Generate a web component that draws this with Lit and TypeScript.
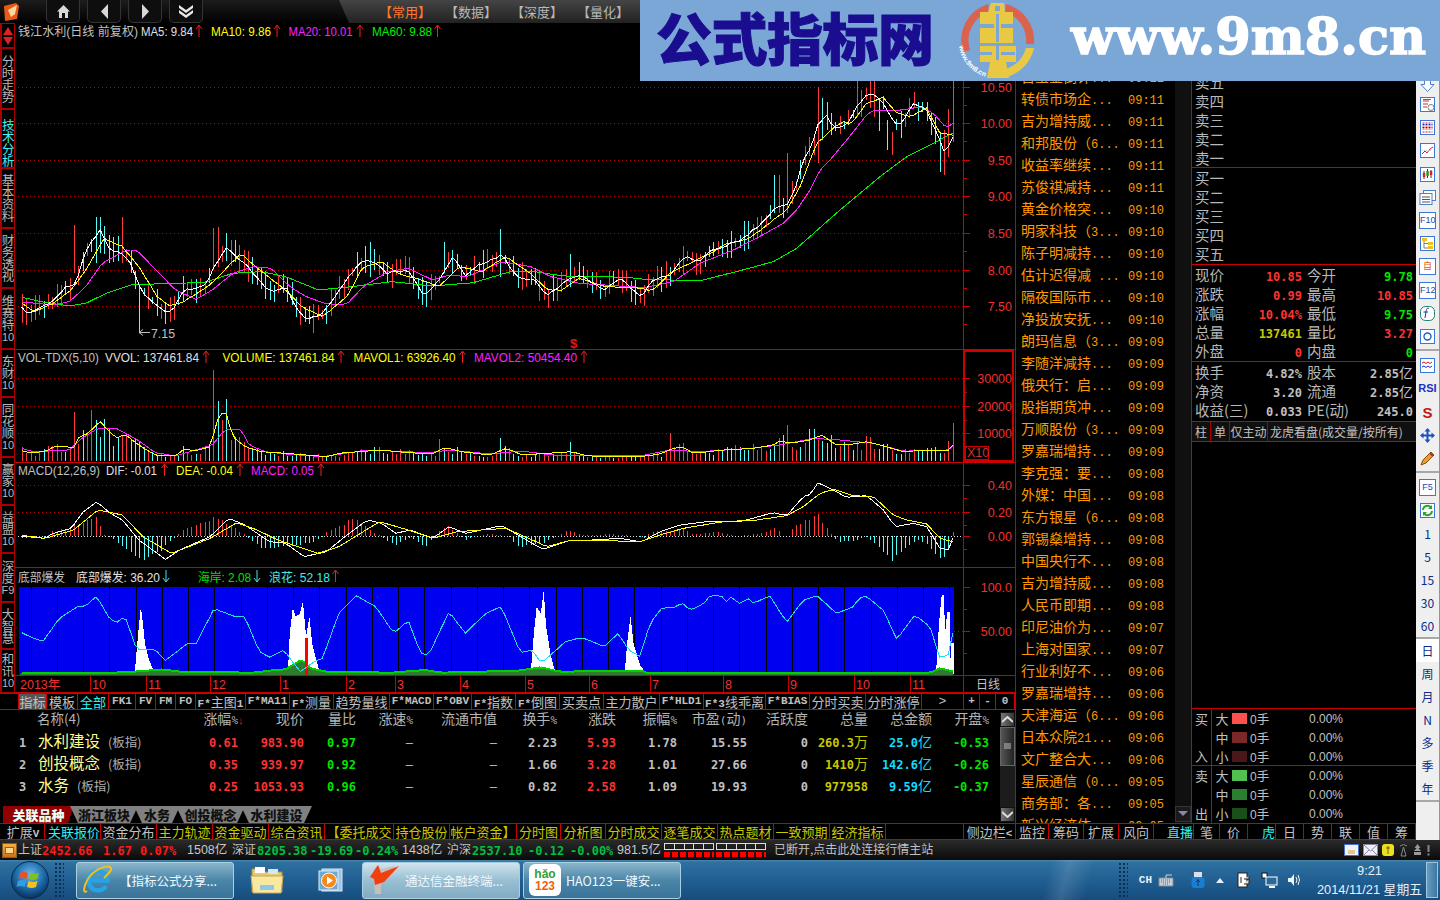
import { LitElement, html, svg, css } from 'lit';
import { customElement } from 'lit/decorators.js';

type P = number[];
const z1 = (a: P[]) => a.map(([x, y]) => [x / 2.45, y / 3]);
const z2 = (a: P[]) => a.map(([x, y]) => [x / 2.45, 350 + y / 3]);
const z3 = (a: P[]) => a.map(([x, y]) => [640 + x / 3, y / 3]);
const z4 = (a: P[]) => a.map(([x, y]) => [640 + x / 3, 350 + y / 3]);
const lerp = (pts: P[], x: number) => {
  if (x <= pts[0][0]) return pts[0][1];
  for (let i = 1; i < pts.length; i++) {
    if (x <= pts[i][0]) {
      const [a, b] = [pts[i - 1], pts[i]];
      return a[1] + ((b[1] - a[1]) * (x - a[0])) / (b[0] - a[0] || 1);
    }
  }
  return pts[pts.length - 1][1];
};
let seed = 20141121;
const rnd = () => {
  seed = (seed * 1664525 + 1013904223) >>> 0;
  return seed / 4294967296;
};

const N = 215;
const xs = Array.from({ length: N }, (_, i) => 952.7 - 4.35 * (N - 1 - i));
const line = (pts: P[], jitter = 0, lim = 953) => {
  const ps = xs.filter(x => x >= pts[0][0] - 1 && x <= lim).map(x => `${x.toFixed(1)},${(lerp(pts, x) + (rnd() - 0.5) * jitter).toFixed(1)}`);
  return ps.join(' ');
};

const ma5 = [...z1([[48,905],[60,940],[90,930],[130,905],[160,862],[185,855],[210,750],[245,690],[270,750],[300,760],[320,790],[345,870],[370,900],[405,935],[425,930],[450,870],[500,860],[530,790],[555,745],[600,790],[640,850],[665,875],[700,860],[725,920],[750,960],[790,940],[820,890],[860,820],[890,780],[925,790],[945,820],[1000,810],[1040,890],[1075,840],[1110,770],[1140,825],[1180,790],[1230,765],[1265,830],[1310,840],[1340,885],[1385,845],[1420,825],[1480,870],[1520,835],[1568,890]]), ...z3([[0,895],[40,840],[90,825],[135,770],[175,785],[210,755],[300,720],[340,690],[385,650],[410,620],[445,615],[470,550],[490,480],[515,440],[530,380],[560,345],[580,385],[620,375],[650,320],[685,280],[720,295],[750,345],[775,385],[820,310],[860,330],[890,400],[915,460],[940,405]])];
const ma10 = [...z1([[48,905],[85,935],[130,910],[170,875],[210,810],[255,715],[300,740],[340,800],[385,890],[415,918],[450,905],[515,855],[590,760],[625,800],[690,860],[740,920],[790,950],[850,890],[890,800],[935,785],[975,820],[1030,840],[1075,860],[1125,800],[1180,815],[1240,770],[1300,820],[1340,868],[1375,870],[1420,835],[1480,860],[1568,865]]), ...z3([[0,868],[40,870],[90,820],[150,790],[210,760],[250,735],[330,715],[400,660],[440,630],[480,560],[510,480],[530,430],[580,385],[610,365],[630,375],[680,310],[730,292],[770,340],[810,350],[860,325],[900,400],[935,405]])];
const ma20 = [...z1([[48,905],[130,915],[170,905],[210,860],[250,790],[310,750],[335,750],[390,820],[430,870],[480,898],[520,870],[570,820],[620,800],[665,805],[710,860],[750,890],[800,912],[850,912],[890,860],[950,815],[1000,805],[1060,840],[1100,825],[1145,830],[1230,785],[1300,800],[1350,830],[1420,850],[1480,855],[1568,862]]), ...z3([[0,865],[50,855],[100,845],[180,790],[280,750],[340,720],[430,670],[470,630],[510,570],[540,510],[570,480],[620,420],[680,345],[700,330],[790,330],[840,320],[880,340],[920,385],[935,370]])];
const ma60 = [...z1([[48,890],[100,905],[170,918],[210,910],[260,880],[320,855],[420,850],[500,848],[570,820],[640,815],[700,830],[780,870],[860,860],[960,845],[1060,858],[1160,848],[1250,815],[1310,815],[1380,828],[1450,828],[1568,835]]), ...z3([[0,838],[180,842],[300,812],[400,785],[470,745],[600,630],[720,530],[800,470],[880,430],[935,400]])];

const isUp: boolean[] = [];
const candles: { r: string; c: string } = (() => {
  const over: [number, number, number, boolean][] = [];
  const o1: P[] = [[340,855,1000,0],[185,675,820,1],[230,650,790,0],[245,650,760,0],[300,652,790,1],[520,685,810,1],[537,682,800,1],[1230,688,830,0],[1393,762,860,0],[910,725,830,0],[1087,725,820,0]];
  const o3: P[] = [[405,525,640,0],[412,525,640,1],[448,460,640,1],[532,262,490,1],[545,295,420,0],[655,243,350,1],[703,243,350,1],[938,243,425,1],[925,328,470,1],[907,390,525,1],[897,400,515,0],[748,360,450,0],[757,395,465,1],[712,300,392,0]];
  o1.forEach(o => over.push([o[0] / 2.45, o[1] / 3, o[2] / 3, !!o[3]]));
  o3.forEach(o => over.push([640 + o[0] / 3, o[1] / 3, o[2] / 3, !!o[3]]));
  let r = '', c = '';
  xs.forEach((x, i) => {
    const m = lerp(ma5, x);
    const rising = lerp(ma5, x + 6) < lerp(ma5, x - 6);
    let up = rnd() < 0.72 ? rising : !rising;
    let y1 = m - 3 - rnd() * 13;
    let y2 = m + 3 + rnd() * 13;
    const ov = over.find(o => Math.abs(o[0] - x) <= 2.2);
    if (ov) { y1 = ov[1]; y2 = ov[2]; up = ov[3]; }
    isUp[i] = up;
    const s = `M${Math.round(x) + 0.5} ${y1.toFixed(0)}V${y2.toFixed(0)}`;
    if (up) r += s; else c += s;
  });
  return { r, c };
})();

const vol1 = [...z2([[48,300],[70,308],[110,305],[135,288],[165,290],[180,295],[190,265],[215,250],[245,215],[265,240],[285,265],[305,252],[340,285],[380,315],[430,318],[450,298],[480,302],[515,290],[535,200],[552,182],[570,260],[600,290],[640,305],[700,310],[800,320],[830,310],[930,300],[1000,308],[1060,312],[1090,292],[1130,305],[1200,315],[1240,295],[1280,315],[1400,305],[1440,318],[1568,320]]), ...z4([[0,320],[60,312],[100,295],[130,292],[160,310],[250,300],[340,295],[400,285],[420,272],[450,280],[510,270],[545,255],[590,285],[640,282],[680,275],[720,285],[790,305],[870,300],[925,300],[935,285]])];
const vol2 = [...z2([[48,293],[80,305],[170,300],[200,265],[240,235],[285,235],[340,272],[380,308],[430,318],[520,285],[550,240],[590,237],[610,285],[650,305],[700,312],[790,320],[900,300],[1050,308],[1100,300],[1200,312],[1280,303],[1350,315],[1568,318]]), ...z4([[0,318],[90,300],[180,305],[330,295],[420,285],[520,265],[600,270],[700,280],[790,303],[920,302],[935,290]])];
const volBars = (() => {
  const over: [number, number, boolean][] = [];
  ([[520,60,1],[530,153,0],[185,185,1],[224,180,1],[232,210,0],[1078,268,1],[1230,265,0],[1393,275,0]] as P[]).forEach(o => over.push([o[0] / 2.45, 350 + o[1] / 3, !!o[2]]));
  ([[95,250,1],[448,225,1],[514,237,0],[937,220,1],[925,272,1]] as P[]).forEach(o => over.push([640 + o[0] / 3, 350 + o[1] / 3, !!o[2]]));
  let r = '', c = '';
  xs.forEach((x, i) => {
    const h = (461 - lerp(vol1, x)) * (0.55 + rnd() * 0.8);
    let top = 461 - h, up = isUp[i];
    const ov = over.find(o => Math.abs(o[0] - x) <= 2.2);
    if (ov) { top = ov[1]; up = ov[2]; }
    const s = `M${Math.round(x) + 0.5} ${top.toFixed(0)}V461`;
    if (up) r += s; else c += s;
  });
  return { r, c };
})();

const dif = [...z2([[48,558],[110,565],[130,550],[175,535],[200,490],[237,455],[270,490],[300,510],[340,570],[380,605],[405,628],[440,600],[515,560],[560,505],[600,525],[660,575],[700,580],[745,620],[800,605],[850,555],[900,510],[935,520],[970,550],[1005,540],[1060,565],[1100,530],[1140,550],[1230,527],[1290,570],[1330,598],[1400,570],[1450,570],[1520,565],[1568,575]]), ...z4([[0,578],[60,545],[120,525],[200,515],[300,515],[400,488],[440,497],[490,440],[515,432],[530,397],[570,415],[620,442],[680,437],[730,480],[765,530],[820,520],[860,530],[900,595],[930,600],[938,565]])];
const dea = [...z2([[48,555],[110,565],[180,540],[240,480],[300,495],[350,560],[420,610],[515,565],[580,518],[630,540],[680,570],[780,610],[830,590],[930,515],[1000,540],[1060,565],[1120,545],[1240,535],[1340,590],[1400,570],[1480,572],[1568,575]]), ...z4([[0,575],[60,555],[130,535],[250,515],[350,510],[440,497],[490,470],[540,430],[580,418],[640,437],[700,440],[760,495],[800,510],[860,522],[900,565],[938,575]])];
const histPts = [...z2([[48,565],[110,562],[125,545],[180,525],[235,495],[255,555],[265,560],[300,590],[345,640],[390,610],[425,565],[435,555],[450,535],[520,500],[545,510],[600,555],[610,565],[640,600],[720,590],[770,575],[790,560],[800,545],[870,498],[920,550],[940,565],[965,590],[1000,565],[1015,570],[1040,595],[1065,555],[1095,525],[1125,555],[1140,570],[1200,550],[1245,560],[1270,595],[1330,580],[1370,555],[1390,540],[1430,555],[1500,552],[1568,560]]), ...z4([[0,575],[30,545],[100,540],[130,530],[150,552],[240,545],[290,558],[370,548],[405,532],[430,558],[440,560],[460,530],[530,485],[575,555],[590,575],[640,575],[680,560],[720,600],[760,638],[790,600],[830,570],[860,585],[905,635],[925,600],[938,545]])];
const hist = (() => {
  let r = '', c = '';
  xs.forEach(x => {
    if (x < 19) return;
    const t = lerp(histPts, x);
    const y = 536 + (t - 536) * (0.82 + rnd() * 0.18);
    const s = `M${Math.round(x) + 0.5} 536V${y.toFixed(0)}`;
    if (y < 536) r += s; else c += s;
  });
  return { r, c };
})();

const cy = [...z2([[48,845],[70,858],[105,875],[125,840],[145,805],[190,770],[210,768],[237,738],[265,800],[285,820],[305,795],[335,900],[380,898],[405,932],[460,880],[480,882],[525,775],[575,800],[600,800],[635,905],[660,922],[695,900],[735,965],[770,935],[790,925],[830,790],[873,736],[920,770],[965,850],[1000,810],[1030,910],[1050,915],[1100,785],[1140,850],[1190,790],[1228,770],[1275,908],[1305,900],[1325,940],[1385,875],[1425,862],[1480,890],[1515,850],[1540,900],[1568,920]]), ...z4([[0,920],[30,820],[65,775],[105,772],[125,758],[150,780],[190,762],[210,737],[245,738],[255,760],[270,740],[300,760],[328,745],[340,760],[390,738],[440,817],[490,750],[530,737],[590,790],[640,770],[660,742],[680,740],[730,780],[770,868],[825,795],[870,830],[900,925],[930,910],[938,850]])];
const grn = [...z2([[48,968],[250,970],[330,965],[400,958],[440,965],[620,968],[660,962],[700,958],[740,928],[760,955],[800,965],[960,968],[1040,960],[1080,968],[1270,962],[1325,952],[1370,965],[1568,962]]), ...z4([[0,960],[25,970],[760,968],[870,968],[900,955],[940,965]])];
const pts = (a: P[]) => a.map(p => `${p[0].toFixed(1)},${p[1].toFixed(1)}`).join(' ');
const spikes = [
  z2([[330,972],[335,900],[340,830],[345,770],[350,820],[355,880],[365,930],[380,972]]),
  z2([[705,972],[710,850],[717,775],[725,800],[735,790],[742,755],[750,860],[758,800],[765,880],[775,930],[785,972]]),
  z2([[1300,972],[1308,850],[1315,770],[1325,790],[1332,720],[1338,830],[1350,920],[1362,972]]),
  z2([[1530,972],[1538,860],[1545,800],[1552,880],[1568,945],[1568,972]]),
  z4([[0,945],[20,972],[0,972]]),
  z4([[888,972],[897,820],[905,735],[912,735],[915,850],[922,785],[930,785],[932,972]]),
  z4([[933,972],[933,880],[942,880],[942,972]]),
];

const textEl = (x: number, y: number, t: string, fill: string, len?: number, anchor = 'start') =>
  len
    ? svg`<text x=${x} y=${y} fill=${fill} textLength=${len} lengthAdjust="spacingAndGlyphs">${t}</text>`
    : svg`<text x=${x} y=${y} fill=${fill} text-anchor=${anchor}>${t}</text>`;
const arrow = (x: number, y: number, c: string, up = true) =>
  up
    ? svg`<path d="M${x} ${y + 12}V${y + 1}M${x - 3} ${y + 4}L${x} ${y}L${x + 3} ${y + 4}" stroke=${c} fill="none"/>`
    : svg`<path d="M${x} ${y}V${y + 11}M${x - 3} ${y + 8}L${x} ${y + 12}L${x + 3} ${y + 8}" stroke=${c} fill="none"/>`;

const RED = '#cc0000', GRID = '#b80000';
const gridLine = (y: number) => svg`<line x1="18" x2="963" y1=${y + 0.5} y2=${y + 0.5} stroke=${GRID} stroke-dasharray="1 3"/>`;
const tick = (y: number, long = true) => svg`<line x1="963" x2=${long ? 970 : 967} y1=${y + 0.5} y2=${y + 0.5} stroke=${RED}/>`;
const axisT = (y: number, t: string) => svg`<text x="1012" y=${y + 4.5} fill="#f03030" text-anchor="end" class="ax">${t}</text>`;
const vAxis = (y1: number, y2: number) => svg`<line x1="963.5" x2="963.5" y1=${y1} y2=${y2} stroke=${RED}/>`;

const pricePane = () => {
  const ys: [number, string][] = [[87,'10.50'],[123,'10.00'],[160,'9.50'],[196,'9.00'],[233,'8.50'],[270,'8.00'],[306,'7.50']];
  return svg`
  ${ys.map(([y]) => gridLine(y))}
  ${vAxis(23, 349)}
  ${ys.map(([y, t]) => svg`${tick(y)}${axisT(y, t)}${tick(y + 18, false)}`)}
  <g shape-rendering="crispEdges"><path d=${candles.r} stroke="#ff3a3a" fill="none"/><path d=${candles.c} stroke="#54fcfc" fill="none"/>
  <polyline points=${line(ma60)} fill="none" stroke="#00f000"/>
  <polyline points=${line(ma20)} fill="none" stroke="#ff20ff"/>
  <polyline points=${line(ma10, 1)} fill="none" stroke="#ffff00"/>
  <polyline points=${line(ma5, 2)} fill="none" stroke="#ffffff"/></g>
  ${textEl(18, 36, '钱江水利(日线 前复权)', '#c0c0c0', 120)}
  ${textEl(141, 36, 'MA5: 9.84', '#e0e0e0', 52)}${arrow(199, 25, '#f02020')}
  ${textEl(211, 36, 'MA10: 9.86', '#ffff00', 60)}${arrow(277, 25, '#f02020')}
  ${textEl(288.6, 36, 'MA20: 10.01', '#ff20ff', 64)}${arrow(360, 25, '#f02020')}
  ${textEl(372, 36, 'MA60: 9.88', '#00f000', 60)}${arrow(437.5, 25, '#f02020')}
  <path d="M139 332.5h11M139 332.5l4-3M139 332.5l4 3" stroke="#c0c0c0" fill="none"/>
  ${textEl(151, 338, '7.15', '#c0c0c0', 24)}
  <text x="573.5" y="348" fill="#f01010" text-anchor="middle" class="dollar">$</text>
  <line x1="15" x2="1015" y1="349.5" y2="349.5" stroke=${RED}/>`;
};
const volPane = () => {
  const ys: [number, string][] = [[378,'30000'],[406,'20000'],[433,'10000']];
  return svg`
  ${ys.map(([y]) => gridLine(y))}
  ${ys.map(([y, t]) => svg`${tick(y)}${axisT(y, t)}${tick(y + 14, false)}`)}
  <g shape-rendering="crispEdges"><path d=${volBars.r} stroke="#ff3a3a" fill="none"/><path d=${volBars.c} stroke="#54fcfc" fill="none"/>
  <polyline points=${line(vol2)} fill="none" stroke="#ff20ff"/>
  <polyline points=${line(vol1)} fill="none" stroke="#ffff00"/></g>
  ${textEl(18, 362, 'VOL-TDX(5,10)', '#c0c0c0', 81)}
  ${textEl(105, 362, 'VVOL: 137461.84', '#e0e0e0', 94)}${arrow(206, 351, '#f02020')}
  ${textEl(222.5, 362, 'VOLUME: 137461.84', '#ffff00', 112)}${arrow(341, 351, '#f02020')}
  ${textEl(353.5, 362, 'MAVOL1: 63926.40', '#ffff00', 102)}${arrow(462.5, 351, '#f02020')}
  ${textEl(474, 362, 'MAVOL2: 50454.40', '#ff20ff', 103)}${arrow(584, 351, '#f02020')}
  <rect x="964" y="351" width="49" height="110" fill="none" stroke=${RED} stroke-width="2"/>
  <rect x="965.5" y="446.5" width="23" height="13" fill="none" stroke=${RED}/>
  <text x="967" y="457" fill="#d03030">X10</text>
  <line x1="15" x2="1015" y1="462.5" y2="462.5" stroke=${RED}/>`;
};
const macdPane = () => {
  const ys: [number, string][] = [[485,'0.40'],[512,'0.20'],[536,'0.00']];
  return svg`
  ${gridLine(485)}${gridLine(512)}
  <line x1="18" x2="963" y1="536.5" y2="536.5" stroke="#e0e0e0" stroke-dasharray="1 2"/>
  ${vAxis(463, 568)}
  ${ys.map(([y, t]) => svg`${tick(y)}${axisT(y, t)}${tick(y + 13, false)}`)}
  <g shape-rendering="crispEdges"><path d=${hist.r} stroke="#ff3a3a" fill="none"/><path d=${hist.c} stroke="#54fcfc" fill="none"/>
  <polyline points=${line(dif)} fill="none" stroke="#ffffff"/>
  <polyline points=${line(dea)} fill="none" stroke="#ffff00"/></g>
  ${textEl(18, 475, 'MACD(12,26,9)', '#c0c0c0', 82)}
  ${textEl(106, 475, 'DIF: -0.01', '#e0e0e0', 51)}${arrow(164.5, 464, '#f02020')}
  ${textEl(176, 475, 'DEA: -0.04', '#ffff00', 57)}${arrow(240, 464, '#f02020')}
  ${textEl(251, 475, 'MACD: 0.05', '#ff20ff', 63)}${arrow(321, 464, '#f02020')}
  <line x1="15" x2="1015" y1="567.5" y2="567.5" stroke=${RED}/>`;
};
const signalPane = () => {
  const vbars = Array.from({ length: 36 }, (_, i) => 30.6 + i * 26.25).filter(x => x < 953);
  const gpoly = `19,675 ${line(grn, 0)} 953,675`;
  return svg`
  <rect x="19" y="587" width="935" height="88" fill="#0000f0"/>
  ${vAxis(568, 675)}
  ${vbars.map(x => svg`<line x1=${Math.round(x) + 0.5} x2=${Math.round(x) + 0.5} y1="587" y2="675" stroke="#000"/>`)}
  <g shape-rendering="crispEdges">
  ${spikes.map(s => svg`<polygon points=${pts(s)} fill="#ffffff"/>`)}
  <polygon points=${gpoly} fill="#2f7a2f"/>
  <polyline points=${line(grn, 0)} fill="none" stroke="#00d000" stroke-width="2"/>
  <rect x="305" y="638" width="3" height="37" fill="#ff0000"/>
  <polyline points=${line(cy, 0.5)} fill="none" stroke="#20e0f0"/></g>
  <line x1="963" x2="970" y1="587.5" y2="587.5" stroke=${RED}/>${tick(609, false)}${tick(631)}${tick(653, false)}
  ${axisT(587, '100.0')}${axisT(631, '50.00')}
  <line x1="954" x2="963" y1="631.5" y2="631.5" stroke=${GRID} stroke-dasharray="1 3"/>
  ${textEl(18, 582, '底部爆发', '#c0c0c0', 47)}
  ${textEl(76, 582, '底部爆发: 36.20', '#e0e0e0', 84)}${arrow(166, 570, '#40e8f0', false)}
  ${textEl(198, 582, '海岸: 2.08', '#00e000', 53)}${arrow(257, 570, '#40e8f0', false)}
  ${textEl(269, 582, '浪花: 52.18', '#40e8f0', 61)}${arrow(335.5, 570, '#f02020')}
  <line x1="15" x2="1015" y1="675.5" y2="675.5" stroke=${RED}/>`;
};
const datePane = () => {
  const ds: [number, string][] = [[92,'10'],[148,'11'],[212,'12'],[282,'1'],[348,'2'],[397,'3'],[462,'4'],[527,'5'],[591,'6'],[652,'7'],[725,'8'],[790,'9'],[856,'10'],[912,'11']];
  return svg`
  ${textEl(20, 689, '2013年', '#f03030')}
  ${ds.map(([x, t]) => svg`<line x1=${x - 1.5} x2=${x - 1.5} y1="676" y2="692" stroke=${RED}/>${textEl(x, 689, t, '#f03030')}`)}
  ${vAxis(676, 692)}
  ${textEl(976, 689, '日线', '#c0c0c0', 24)}
  <line x1="15" x2="1015" y1="692.5" y2="692.5" stroke=${RED}/>`;
};

const newsRows: [string, string][] = [['百宝金倒计...','09:11'],['转债市场企...','09:11'],['吉为增持威...','09:11'],['和邦股份（6...','09:11'],['收益率继续...','09:11'],['苏俊祺减持...','09:11'],['黄金价格突...','09:10'],['明家科技（3...','09:10'],['陈子明减持...','09:10'],['估计迟得减 ...','09:10'],['隔夜国际市...','09:10'],['净投放安抚...','09:10'],['朗玛信息（3...','09:09'],['李随洋减持...','09:09'],['俄央行：启...','09:09'],['股指期货冲...','09:09'],['万顺股份（3...','09:09'],['罗嘉瑞增持...','09:09'],['李克强：要...','09:08'],['外媒：中国...','09:08'],['东方银星（6...','09:08'],['郭锡燊增持...','09:08'],['中国央行不...','09:08'],['吉为增持威...','09:08'],['人民币即期...','09:08'],['印尼油价为...','09:07'],['上海对国家...','09:07'],['行业利好不...','09:06'],['罗嘉瑞增持...','09:06'],['天津海运（6...','09:06'],['日本众院21...','09:06'],['文广整合大...','09:06'],['星辰通信（0...','09:05'],['商务部：各...','09:05'],['新兴经济体...','09:05']];

const mix = (t: string) =>
  t.split(/([\u4e00-\u9fff\u3000-\u303f\uff00-\uffef]+)/).filter(Boolean).map(s =>
    /[\u4e00-\u9fff\u3000-\u303f\uff00-\uffef]/.test(s) ? html`<span class="cjk">${s}</span>` : html`<span class="lat">${s}</span>`);

const barTabs: [string, number, number?][] = [['指标',19,1],['模板',47],['全部',78,2],['FK1',109],['FV',136],['FM',156],['FO',176],['F*主图1',196],['F*MA11',246],['F*测量',290],['趋势量线',334],['F*MACD',390],['F*OBV',434],['F*指数',472],['F*倒图',516],['买卖点',560],['主力散户',604],['F*HLD1',660],['F*3线乖离',704],['F*BIAS',766],['分时买卖',810],['分时涨停',866],['',922],['+',964],['-',980],['0',996]];
const barEnd = 1015;
const lowTabs: [string, number, string][] = [['扩展V',2,'g'],['关联报价',45,'c'],['资金分布',101,'g'],['主力轨迹',157,'y'],['资金驱动',213,'y'],['综合资讯',269,'y'],['【委托成交',325,'y'],['持仓股份',394,'y'],['帐户资金】',450,'y'],['分时图',517,'y'],['分析图',561,'y'],['分时成交',606,'y'],['逐笔成交',662,'y'],['热点题材',718,'y'],['一致预期',774,'y'],['经济指标',830,'y'],['',886,'g'],['侧边栏<',964,'g'],['监控',1016,'g'],['筹码',1049,'g'],['扩展',1084,'g'],['风向',1119,'g'],['直播',1154,'c'],['笔',1194,'g'],['价',1220,'g'],['虎',1248,'c'],['日',1276,'g'],['势',1304,'g'],['联',1332,'g'],['值',1360,'g'],['筹',1388,'g']];
const lowEnd = 1416;

const cols = [48, 66, 52, 57, 84, 60, 59, 61, 70, 61, 60, 64, 57];
const heads = ['涨幅%', '现价', '量比', '涨速%', '流通市值', '换手%', '涨跌', '振幅%', '市盈(动)', '活跃度', '总量', '总金额', '开盘%'];
const rowsT: { n: string; nm: string; tag: string; v: string[] }[] = [
  { n: '1', nm: '水利建设', tag: '(板指)', v: ['0.61','983.90','0.97','—','—','2.23','5.93','1.78','15.55','0','260.3万','25.0亿','-0.53'] },
  { n: '2', nm: '创投概念', tag: '(板指)', v: ['0.35','939.97','0.92','—','—','1.66','3.28','1.01','27.66','0','1410万','142.6亿','-0.26'] },
  { n: '3', nm: '水务', tag: '(板指)', v: ['0.25','1053.93','0.96','—','—','0.82','2.58','1.09','19.93','0','977958','9.59亿','-0.37'] },
];
const colCls = ['r', 'r', 'gn', 'g', 'g', 'g', 'r', 'g', 'g', 'g', 'y', 'cy', 'gn'];

const railTabs: [string, number, string?][] = [['分时走势',61],['技术分析',59,'c'],['基本资料',60],['财务透视',60],['维赛特|10',61],['东财|10',48],['同花顺|10',60],['赢家|10',48],['益盟|10',48],['深度|F9',49],['大智慧',47],['和讯|10',44]];

const quoteRows: [string, string, string, string, string, string][] = [
  ['现价','10.85','r','今开','9.78','gn'],['涨跌','0.99','r','最高','10.85','r'],['涨幅','10.04%','r','最低','9.75','gn'],['总量','137461','y','量比','3.27','r'],['外盘','0','r','内盘','0','gn'],
];
const quote2: [string, string, string, string][] = [['换手','4.82%','股本','2.85亿'],['净资','3.20','流通','2.85亿'],['收益(三)','0.033','PE(动)','245.0']];

const flows = (side: string[], labels: string[], colors: string[]) => html`
  <div class="flow">
    <div class="flowside">${side.map(s => html`<span>${s}</span>`)}</div>
    <div class="flowrows">
      ${labels.map((l, i) => html`<div class="flowrow"><span class="fl">${l}</span><i class="sw" style="background:${colors[i]}"></i><span class="fv">${mix('0手')}</span><span class="fp">0.00%</span></div>`)}
    </div>
  </div>`;

const box = (inner: unknown) => html`<svg width="17" height="17" viewBox="0 0 17 17">${inner}</svg>`;
const frame = svg`<rect x="1.5" y="1.5" width="14" height="14" fill="#fff" stroke="#3a78d8"/>`;
const icons: Record<string, unknown> = {
  down: box(svg`<path d="M5.5 1.5h6v7h3.5l-6.5 7-6.5-7h3.5z" fill="#fff" stroke="#4a80c8"/>`),
  check: box(svg`${frame}<path d="M4 5h6M4 8h5M4 11h4" stroke="#c03030"/><path d="M4 3.5h8" stroke="#309030"/><circle cx="12" cy="11.5" r="3" fill="none" stroke="#808080"/>`),
  grid: box(svg`${frame}<path d="M3.5 4h10M3.5 7h10M3.5 10h10M3.5 13h10" stroke="#d02020" stroke-dasharray="2 1"/><path d="M3.5 5.5h10M3.5 8.5h10" stroke="#2020c0" stroke-dasharray="2 1"/>`),
  lineup: box(svg`${frame}<path d="M3 12l3-3 2 2 3-4 3-2" fill="none" stroke="#e02020"/><path d="M3 8.5h10" stroke="#bbb" stroke-dasharray="1 1"/>`),
  candle: box(svg`${frame}<path d="M5 5v8M8.5 3v9M12 4v8" stroke="#333"/><rect x="3.8" y="7" width="2.5" height="4" fill="#e02020"/><rect x="7.3" y="5" width="2.5" height="5" fill="#20a020"/><rect x="10.8" y="5" width="2.5" height="4" fill="#e02020"/>`),
  stack: box(svg`<rect x="4.5" y="1.5" width="12" height="10" fill="#fff" stroke="#4a80c8"/><rect x="1" y="4.5" width="12" height="11" fill="#fff" stroke="#4a80c8"/><path d="M3 8h8M3 10.5h8M3 13h8" stroke="#555"/>`),
  tree: box(svg`${frame}<rect x="3" y="3" width="5" height="3" fill="#f0c020"/><rect x="9" y="7" width="5" height="3" fill="#f0c020"/><rect x="9" y="11" width="5" height="3" fill="#f0c020"/><path d="M5 6v7h4M5 8.5h4" stroke="#808080" fill="none"/>`),
  wave: box(svg`${frame}<path d="M3 6l2-1 2 1.5 2-1.5 2 1.5 2-1.5" fill="none" stroke="#d02020"/><path d="M3 10l2-1 2 1.5 2-1.5 2 1.5 2-1.5" fill="none" stroke="#2030c0"/>`),
  circle: box(svg`${frame}<circle cx="8.5" cy="8.5" r="3.5" fill="none" stroke="#2060c0" stroke-width="1.4"/>`),
  fx: box(svg`<rect x="1.5" y="1.5" width="14" height="14" rx="5" fill="#fff" stroke="#208070"/><path d="M10 3.5c-2-1-2.5.5-3 3L6 13M4.5 7H9" stroke="#2030a0" fill="none"/>`),
  move: box(svg`<path d="M8.5 1l3 3.5h-2v3h3v-2L16 8.5l-3.500 3v-2h-3v3h2l-3 3.500-3-3.500h2v-3h-3v2L1 8.500l3.500-3v2h3v-3h-2z" fill="#1a50c0"/>`),
  pencil: box(svg`<path d="M2 15l2-5 8-8 3 3-8 8z" fill="#e8a030" stroke="#805010"/><path d="M11 3l3 3" stroke="#b03030" stroke-width="2"/>`),
  refresh: box(svg`${frame}<path d="M4 8a4.500 4.500 0 0 1 8-2.500M13 9a4.500 4.500 0 0 1-8 2.500" fill="none" stroke="#30a030" stroke-width="2"/><path d="M13 3v4h-4z M4 14v-4h4z" fill="#30a030"/>`),
};
const txtIcon = (t: string, c: string) => html`<span class="ti" style="color:${c}">${t}</span>`;

const orb = html`<svg width="44" height="40" viewBox="0 0 44 40">
  <defs><radialGradient id="orbg" cx="50%" cy="35%" r="60%"><stop offset="0" stop-color="#6fb8e8"/><stop offset="0.6" stop-color="#1f6fb0"/><stop offset="1" stop-color="#0c3a68"/></radialGradient></defs>
  <circle cx="22" cy="20" r="18.500" fill="url(#orbg)" stroke="#0a2a4a"/>
  <path d="M12 13q4 -2 8 0l-1.500 6q-4 -2 -8 0z" fill="#f05020"/><path d="M22 13q4 2 9 0l-1.500 6q-4 2 -9 0z" fill="#80c020"/>
  <path d="M10 21q4 -2 8 0l-1.500 6q-4 -2 -8 0z" fill="#30a0e0"/><path d="M20.500 21q4 2 9 0l-1.500 6q-4 2 -9 0z" fill="#f8c020"/>
</svg>`;
const grip = html`<svg width="9" height="38" viewBox="0 0 9 38">${[0, 1, 2, 3, 4, 5, 6, 7, 8].map(i => svg`<path d="M0 ${i * 4 + 2}h2v2h-2zM4 ${i * 4 + 2}h2v2h-2zM8 ${i * 4 + 2}h1v2h-1z" fill="#0c3050"/>`)}</svg>`;
const ieIcon = html`<svg width="32" height="32" viewBox="0 0 32 32"><path d="M7 16.500h18.500A9.500 9.500 0 1 0 24 22" fill="none" stroke="#24a4e8" stroke-width="4.500"/><path d="M5 27C1 30 1 24 6 15S24 1 28 3s-3 8-6 11" fill="none" stroke="#f0c020" stroke-width="2"/></svg>`;
const folderIcon = html`<svg width="34" height="30" viewBox="0 0 34 30"><path d="M2 4h10l2 3h18v20H2z" fill="#e8c870" stroke="#b09040"/><rect x="5" y="2" width="10" height="6" fill="#fff"/><rect x="18" y="4" width="10" height="5" fill="#cfe8f8"/><path d="M1 11h32l-2 17H3z" fill="#f8e8a0" stroke="#c8a850"/><path d="M10 20h14v5H10z" fill="#90c8e8"/></svg>`;
const mediaIcon = html`<svg width="26" height="26" viewBox="0 0 26 26"><rect x="4" y="2" width="20" height="22" fill="#9cc4e4" stroke="#d8e8f4"/><rect x="1" y="4" width="19" height="19" fill="#6fa8d0" stroke="#e0eef8"/><circle cx="11" cy="13.500" r="7.500" fill="#f58a1c" stroke="#fff"/><path d="M9 9.500l6 4-6 4z" fill="#fff"/></svg>`;
const tdxIcon = html`<svg width="30" height="32" viewBox="0 0 30 32"><path d="M4 6l5-5 3 4 14-3-14 14v14H6z" fill="#c8c0b8"/><path d="M1 13l8-12 3 8 18-7-15 16-9 3-1-6z" fill="#f04010"/></svg>`;
const logoTop = html`<svg width="16" height="18" viewBox="0 0 16 18"><path d="M1 3l12-3 3 3-2 13-12 2z" fill="#e85818"/><path d="M5 7l9-5-2 9-4 3z" fill="#f8d8a0"/></svg>`;
const iconsTray = {
  kb: html`<svg width="16" height="14" viewBox="0 0 16 14"><path d="M1 5h14v8H1z" fill="#c8d0d8" stroke="#808890"/><path d="M3 7h10M3 9h10M5 11h6" stroke="#606870" stroke-dasharray="1 1"/><path d="M8 5V2h6" fill="none" stroke="#c8d0d8"/></svg>`,
  usb: html`<svg width="14" height="17" viewBox="0 0 14 17"><rect x="3" y="0" width="8" height="6" fill="#dde"/><rect x="0.500" y="5" width="13" height="11" rx="3" fill="#1a7ed0"/><path d="M7 7v7M5 10l2-2 2 2" stroke="#0a3a70" fill="none"/></svg>`,
  up: html`<svg width="8" height="6" viewBox="0 0 8 6"><path d="M0 6l4-5 4 5z" fill="#e8f0f8"/></svg>`,
  plug: html`<svg width="14" height="18" viewBox="0 0 14 18"><rect x="1" y="2" width="9" height="14" fill="#fff" stroke="#222"/><path d="M7 8h5V5M12 8v5H7" stroke="#222" fill="#ddd"/><path d="M4 12V6" stroke="#222"/></svg>`,
  net: html`<svg width="17" height="17" viewBox="0 0 17 17"><rect x="1" y="1" width="5" height="5" fill="#fff" stroke="#111"/><rect x="5" y="5" width="11" height="8" fill="#2a6a9a" stroke="#fff"/><path d="M8 15h6" stroke="#fff" stroke-width="2"/></svg>`,
  spk: html`<svg width="14" height="14" viewBox="0 0 14 14"><path d="M1 5h3l3-4v12l-3-4H1z" fill="#f0f4f8"/><path d="M9 4q2 3 0 6M11 2q3 5 0 10" stroke="#f0f4f8" fill="none"/></svg>`,
};
const statusIcons = html`
  <svg width="15" height="12" viewBox="0 0 15 12"><rect x="0.500" y="0.500" width="14" height="11" fill="#eef2fa" stroke="#4a70c8"/><path d="M4 7h7M4 9h7" stroke="#d8a020"/></svg>
  <svg width="15" height="12" viewBox="0 0 15 12"><rect x="0.500" y="0.500" width="14" height="11" fill="#eef" stroke="#889"/><path d="M1 1l6.500 6L14 1M1 11l5-5M14 11l-5-5" stroke="#889" fill="none"/></svg>
  <svg width="12" height="12" viewBox="0 0 12 12"><rect width="12" height="12" rx="3" fill="#e8e020"/><path d="M6 2v8M4 4h4" stroke="#806000"/></svg>
  <svg width="11" height="14" viewBox="0 0 11 14"><path d="M5.500 4L3 13h5zM2 3q3.500-3 7 0" stroke="#888" fill="none"/></svg>
  <svg width="9" height="12" viewBox="0 0 9 12"><path d="M4.500 0l3 4h-6zM4.500 3l3.500 4h-7zM1 8h7v3H1z" fill="#999"/></svg>
  <svg width="5" height="11" viewBox="0 0 5 11"><path d="M1.500 0h2v7h-2zM1.500 8.500h2v2h-2z" fill="#888"/></svg>`;
const navIcons = [
  html`<svg width="15" height="15" viewBox="0 0 15 15"><path d="M7.500 1L14 7.500h-2V14H9V9H6v5H3V7.500H1z" fill="#d8d8d8"/></svg>`,
  html`<svg width="9" height="15" viewBox="0 0 9 15"><path d="M8 0v15L1 7.500z" fill="#d8d8d8"/></svg>`,
  html`<svg width="9" height="15" viewBox="0 0 9 15"><path d="M1 0v15l7-7.500z" fill="#d8d8d8"/></svg>`,
  html`<svg width="16" height="14" viewBox="0 0 16 14"><path d="M1 1l7 5 7-5v3L8 9 1 4zM1 6l7 5 7-5v3l-7 5-7-5z" fill="#e8e8e8"/></svg>`,
];

@customElement('app-root')
export class AppRoot extends LitElement {
  static styles = css`
    :host { display: block; width: 1440px; height: 900px; overflow: hidden; background: #000; position: relative; color: #c0c0c0;
      font-family: "Liberation Sans", "Noto Sans CJK SC", sans-serif; font-size: 14px; }
    svg { display: block; }
    svg text { font: 12.5px "Liberation Sans", "Noto Sans CJK SC", sans-serif; }
    svg text.ax { font-size: 12.5px; }
    svg text.dollar { font-size: 13px; font-weight: bold; }
    .cjk { font-family: "Noto Sans CJK SC", sans-serif; font-size: 14px; font-weight: normal; }
    .lat { font-family: "DejaVu Sans Mono", monospace; font-size: 12px; font-weight: bold; }

    .top { height: 23px; display: flex; align-items: center; background: linear-gradient(#1c1c1c, #000); position: relative; }
    .logo { width: 46px; padding-left: 3px; box-sizing: border-box; }
    .navb { display: flex; gap: 7px; }
    .navb div { width: 32px; height: 22px; border: 1px solid #333; border-top: none; border-radius: 0 0 5px 5px; display: flex; align-items: center; justify-content: center; background: #0e0e0e; }
    .menu { position: absolute; left: 339px; right: 0; top: 0; height: 23px; background: linear-gradient(#444, #222); clip-path: polygon(0 0, 100% 0, 100% 100%, 10px 100%); display: flex; gap: 26px; padding-left: 40px; box-sizing: border-box; align-items: center; font-size: 13px; font-family: "Noto Sans CJK SC", sans-serif; }
    .menu span { width: 40px; white-space: nowrap; color: #b8b8b8; }
    .menu span:first-child { color: #ff7a30; }

    .banner { position: absolute; left: 640px; top: 0; width: 800px; height: 81px; background: #7ba7d6; z-index: 5; display: flex; align-items: center; overflow: hidden; }
    .bt { font-family: "Noto Sans CJK SC", sans-serif; font-weight: 900; font-size: 56px; line-height: 71px; height: 81px; color: #1a0d8f; margin-left: 16px; width: 299px; flex: none; white-space: nowrap; letter-spacing: -0.500px; -webkit-text-stroke: 1px #1a0d8f; }
    .burl { font-family: "DejaVu Serif", serif; font-weight: bold; font-size: 51px; line-height: 72px; height: 81px; color: #fff; margin-left: 32px; white-space: nowrap; flex: none; -webkit-text-stroke: 1.500px #fff; }

    .main { display: flex; height: 800px; }
    .left { width: 1015px; display: flex; flex-direction: column; }
    .upper { display: flex; height: 670px; }
    .rail { width: 15px; display: flex; flex-direction: column; }
    .rtop { height: 25px; border: 1px solid #a00; border-left-width: 2px; box-sizing: border-box; display: flex; flex-direction: column; align-items: center; justify-content: center; gap: 2px; }
    .rtab { box-sizing: border-box; border: 1px solid #a00; border-left-width: 2px; display: flex; flex-direction: column; align-items: center; justify-content: center; font-size: 12.500px; line-height: 12px; color: #b8b8b8; overflow: hidden; font-family: "Noto Sans CJK SC", sans-serif; }
    .rtab.c { color: #40f0f0; }
    .rtab b { font: 11px/12px "Liberation Sans", sans-serif; }
    .charts { width: 1000px; display: flex; flex-direction: column; }

    .tabbar { height: 17px; display: flex; border-top: 1px solid #c00; border-bottom: 1px solid #c00; box-sizing: border-box; }
    .tab { box-sizing: border-box; border-right: 1px solid #c00; display: flex; align-items: baseline; justify-content: center; white-space: nowrap; color: #c0c0c0; line-height: 15px; }
    .tab .cjk { font-size: 13px; line-height: 15px; }
    .tab .lat { font-family: "Liberation Mono", monospace; font-size: 11px; line-height: 15px; }
    .tab.a1 { background: #555; }
    .tab.a2, .tab.c, .tab.c .cjk { color: #30f0f0; }
    .tab.y { color: #c8c800; }
    .tabbar .rest { width: 19px; border-right: 1px solid #c00; box-sizing: border-box; display: flex; justify-content: center; color: #999; font-size: 11px; line-height: 13px; }

    .lower { display: flex; height: 113px; }
    .tablewrap { width: 1000px; display: flex; flex-direction: column; margin-top: -3px; }
    .tr { display: flex; height: 22px; align-items: baseline; line-height: 22px; }
    .namecol { width: 190px; flex: none; display: flex; align-items: baseline; white-space: nowrap; box-sizing: border-box; }
    .num { width: 38px; text-align: left; padding-left: 19px; box-sizing: border-box; font: bold 12px "DejaVu Sans Mono", monospace; }
    .nm { color: #ffff90; font-family: "Noto Sans CJK SC", sans-serif; font-size: 15.500px; }
    .tag { font-family: "Noto Sans CJK SC", sans-serif; font-size: 12.500px; color: #b0b0b0; margin-left: 8px; }
    .hn { padding-left: 37px; font-family: "Noto Sans CJK SC", sans-serif; font-size: 13.500px; color: #b4b4b4; }
    .c { white-space: nowrap; display: flex; justify-content: flex-end; align-items: baseline; box-sizing: border-box; flex: none; }
    .h { color: #b4b4b4; }
    .h .lat { font-size: 11px; font-weight: normal; }
    .h i { color: #f01010; font-style: normal; font-size: 11px; width: 6px; margin-right: -6px; }
    .c.r { color: #ff3232; } .c.gn { color: #00e600; } .c.g { color: #c0c0c0; } .c.y { color: #c8c800; } .c.cy { color: #10dcff; }
    .c.dash .lat { font-weight: normal; }
    .tabs2 { display: flex; height: 17px; margin-top: 11px; padding-left: 3px; }
    .tb { height: 17px; line-height: 17px; flex: none; display: flex; align-items: center; justify-content: center; margin-right: -4px; font-family: "Noto Sans CJK SC", sans-serif; font-size: 13px; font-weight: 900; color: #111; background: #808080; clip-path: polygon(0 0, 100% 0, calc(100% - 8px) 100%, 8px 100%); white-space: nowrap; }
    .tb.on { background: #900000; color: #e8fff8; clip-path: polygon(0 0, 100% 0, calc(100% - 6px) 100%, 0 100%); }
    .sb { width: 15px; margin-top: 2px; height: 110px; background: #1c1c1c; display: flex; flex-direction: column; }
    .sbb { height: 15px; background: linear-gradient(90deg, #777, #333); display: flex; align-items: center; justify-content: center; box-sizing: border-box; border: 1px solid #111; }
    .sbt { height: 39px; background: linear-gradient(90deg, #555, #222); border: 1px solid #666; box-sizing: border-box; display: flex; align-items: center; justify-content: center; }
    .sbs { flex: 1; }

    .news { width: 177px; box-sizing: border-box; border-left: 1px solid #c00; border-right: 1px solid #c00; display: flex; height: 800px; }
    .nlist { width: 159px; padding-top: 42px; overflow: hidden; }
    .nrow { height: 22px; line-height: 22px; display: flex; align-items: baseline; color: #ff9a00; white-space: nowrap; }
    .nt { width: 108px; padding-left: 5px; box-sizing: border-box; }
    .nt .lat { font-weight: normal; font-family: "Liberation Mono", monospace; }
    .ntm { margin-left: 4px; font-family: "Liberation Mono", monospace; font-size: 12px; }
    .nsb { width: 16px; background: #101010; display: flex; flex-direction: column; justify-content: flex-end; }
    .nbtn { height: 16px; margin: 0 0 1px; background: #1a1a1a; border: 1px solid #333; box-sizing: border-box; display: flex; align-items: center; justify-content: center; }

    .quote { width: 224px; display: flex; flex-direction: column; box-sizing: border-box; }
    .qs { box-sizing: border-box; padding-left: 3px; border-bottom: 1px solid #c00; }
    .qr { height: 19px; line-height: 19px; white-space: nowrap; font-family: "Noto Sans CJK SC", sans-serif; font-size: 14.500px; color: #b8b8b8; }
    .qg { display: grid; grid-template-columns: 40px 67px 45px 66px; align-items: baseline; }
    .qv { text-align: right; font: bold 12px/19px "DejaVu Sans Mono", monospace; color: #c0c0c0; white-space: nowrap; }
    .qv .cjk { font-weight: normal; }
    .qv.r { color: #ff3232; } .qv.gn { color: #00e600; } .qv.y { color: #c8c800; }
    .ql2 { padding-left: 5px; }
    .qtabs { height: 20px; display: flex; background: #101010; border-bottom: 1px solid #c00; box-sizing: border-box; font-family: "Noto Sans CJK SC", sans-serif; font-size: 12px; align-items: center; }
    .qtabs span { border-right: 1px solid #a00; height: 100%; display: flex; align-items: center; justify-content: center; box-sizing: border-box; white-space: nowrap; }
    .qfill { flex: 1; border-bottom: 1px solid #c00; }
    .flow { height: 57px; display: flex; border-bottom: 1px solid #c00; box-sizing: border-box; font-family: "Noto Sans CJK SC", sans-serif; font-size: 13px; }
    .flow:last-child { border-bottom: none; }
    .flowside { width: 20px; border-right: 1px solid #c00; display: flex; flex-direction: column; justify-content: space-between; align-items: center; padding: 0; box-sizing: border-box; }
    .flowrows { flex: 1; display: flex; flex-direction: column; }
    .flowrow { height: 19px; display: flex; align-items: center; }
    .fl { width: 20px; text-align: center; margin-left: 0; }
    .sw { width: 15px; height: 11px; display: block; }
    .fv { margin-left: 3px; width: 59px; }
    .fv .cjk { font-size: 12.500px; } .fv .lat { font: 12px "Liberation Sans", sans-serif; }
    .fp { font: 12px "Liberation Sans", sans-serif; }

    .tools { width: 24px; height: 817px; background: #efefef; display: flex; flex-direction: column; align-items: center; padding-top: 53px; box-sizing: border-box; border-right: 1px solid #8098b8; color: #0a2c88; font-size: 12px; position: relative; z-index: 1; }
    .ti0 { height: 17px; display: flex; align-items: center; justify-content: center; }
    .ti1 { height: 23.200px; flex: none; width: 100%; display: flex; align-items: center; justify-content: center; font-family: "Noto Sans CJK SC", sans-serif; }
    .ti1.t { height: 23px; }
    .ti { width: 15px; height: 15px; border: 1px solid #3a78d8; background: #fff; font: 9px/15px "Liberation Sans", "Noto Sans CJK SC", sans-serif; text-align: center; box-sizing: content-box; white-space: nowrap; }
    .bare { font: bold 11px/15px "Liberation Sans", sans-serif; white-space: nowrap; }
    .tsep { height: 2px; background: #a8a8a8; width: 100%; flex: none; }
    .ton { background: #fff; }

    .row3 { height: 17px; display: flex; position: absolute; left: 0; top: 823px; width: 1416px; z-index: 2; background: #000; border-top: 1px solid #c00; border-bottom: 1px solid #c00; box-sizing: border-box; }
    .status { height: 20px; display: flex; align-items: center; background: linear-gradient(#2a2a2a, #0a0a0a); white-space: nowrap; font-size: 12px; margin-top: 17px; position: relative; z-index: 3; }
    .st { box-sizing: border-box; flex: none; overflow: visible; line-height: 18px; }
    .st.g { color: #c0c0c0; font-family: "Noto Sans CJK SC", sans-serif; font-size: 12px; margin-top: -2px; }
    .st.r, .st.gn { font: bold 12px/18px "DejaVu Sans Mono", monospace; margin-top: 1px; }
    .st.r { color: #ff1a1a; } .st.gn { color: #00c040; } .st.w { color: #c8c8c8; font: 12.500px/18px "Liberation Sans", "Noto Sans CJK SC", sans-serif; }
    .sico { width: 15px; height: 15px; background: linear-gradient(#f8b040, #d07010); border: 1px solid #806020; box-sizing: border-box; display: flex; align-items: center; justify-content: center; margin-left: 2px; }
    .sico i { width: 9px; height: 7px; display: block; background: #f8d890; border: 1px solid #a06010; box-sizing: border-box; }
    .sticon { margin-left: auto; display: flex; align-items: center; gap: 4px; padding-right: 9px; }
    .meter { display: flex; flex-direction: column; gap: 2px; width: 50px; margin-right: 2px; flex: none; }
    .mt { height: 7px; border: 1px solid #ddd; box-sizing: border-box; background: linear-gradient(90deg, transparent 19%, #ddd 19%, #ddd 21%, transparent 21%, transparent 39%, #ddd 39%, #ddd 41%, transparent 41%, transparent 59%, #ddd 59%, #ddd 61%, transparent 61%, transparent 79%, #ddd 79%, #ddd 81%, transparent 81%); }
    .mb { height: 5px; background: repeating-linear-gradient(90deg, #f00 0, #f00 6px, transparent 6px, transparent 8px); }
    .taskbar { height: 40px; display: flex; align-items: center; background: linear-gradient(105deg, transparent 72.500%, rgba(255,255,255,.13) 73.800%, transparent 75.500%), linear-gradient(#4a86ad 0, #2e70a0 6%, #215f92 50%, #164c7e 100%); position: relative; overflow: hidden; }
    .tk { height: 37px; width: 158px; box-sizing: border-box; display: flex; align-items: center; border: 1px solid #a8d0e0; border-radius: 3px; background: linear-gradient(#8ab4ca, #4a86a8 50%, #397399); color: #f0f8ff; font-size: 12.500px; white-space: nowrap; overflow: hidden; flex: none; font-family: "Noto Sans CJK SC", sans-serif; }
    .tk.on { background: linear-gradient(#d0e4ee, #98bfd2 50%, #82abc4); }
    .tk .ic { width: 42px; display: flex; justify-content: center; flex: none; }
    .hao { width: 32px; height: 32px; border-radius: 6px; background: #fff; display: flex; flex-direction: column; align-items: center; justify-content: center; line-height: 12px; overflow: hidden; }
    .hao b { color: #30a030; font: bold 12px/12px "Liberation Sans", sans-serif; } .hao i { color: #f06010; font: bold 12px/12px "Liberation Sans", sans-serif; }
    .tray { margin-left: auto; display: flex; align-items: center; height: 40px; color: #e8f0f8; }
    .tray > * { flex: none; }
    .clock { text-align: center; line-height: 19px; color: #e8f0f8; font-size: 12.800px; white-space: nowrap; width: 111px; margin-left: 13px; font-family: "Liberation Sans", "Noto Sans CJK SC", sans-serif; }
    .sd { width: 12px; height: 36px; margin-left: 1px; margin-right: 2px; border: 1px solid #a0c4d8; background: linear-gradient(90deg, #6a9cc0, #3a78a4); box-sizing: border-box; }
  `;

  private cells(list: [string, number, string][], end: number) {
    return list.map(([t, x, k], i) => {
      const w = (i + 1 < list.length ? list[i + 1][1] : end) - x;
      return html`<span class="st ${k}" style="width:${w}px">${t}</span>`;
    });
  }

  render() {
    const stA: [string, number, string][] = [['上证', 18, 'g'], ['2452.66', 42, 'r'], ['', 92, 'g'], ['1.67', 103, 'r'], ['0.07%', 140, 'r'], ['1508亿', 187, 'w'], ['深证', 232, 'g'], ['8205.38', 257, 'gn'], ['-19.69', 310, 'gn'], ['-0.24%', 355, 'gn'], ['1438亿', 402, 'w'], ['沪深', 447, 'g'], ['2537.10', 472, 'gn'], ['-0.12', 528, 'gn'], ['-0.00%', 570, 'gn'], ['981.5亿', 617, 'w']];
    return html`
      <div class="top">
        <div class="logo">${logoTop}</div>
        <div class="navb">${navIcons.map(i => html`<div>${i}</div>`)}</div>
        <div class="menu"><span>【常用】</span><span>【数据】</span><span>【深度】</span><span>【量化】</span></div>
      </div>
      <div class="banner">
        <div class="bt">公式指标网</div>
        <svg width="84" height="81" viewBox="0 0 84 81" style="flex:none">
          <path d="M8 52A38 38 0 0 1 33 4L34 12A30 30 0 0 0 15 50z" fill="#d9634f"/>
          <path d="M51 4A38 38 0 0 1 79 44L71 44A30 30 0 0 0 50 12z" fill="#d9634f"/>
          <path d="M79 48A38 38 0 0 1 46 78L46 70A30 30 0 0 0 71 48z" fill="#e9c944"/>
          <path d="M36 3h13l1 9h8v31h-33v-31h8zM40 6v5h5v-5zM25 46h36v16h-10l3 16h-22l3-16h-10z" fill="#e9c944" fill-rule="evenodd"/>
          <path d="M25 24h14v4h-14zM46 24h12v4h-12zM41 14h3v28h-3zM25 52h12v3h-12zM46 52h14v3h-14zM41 46h3v14h-3z" fill="#7ba7d6"/>
          <path id="lgp" d="M4 46A38 38 0 0 0 36 78" fill="none"/>
          <text style="font:bold 7px 'Liberation Sans',sans-serif" fill="#fff"><textPath href="#lgp">www.9m8.cn</textPath></text>
        </svg>
        <div class="burl">www.9m8.cn</div>
      </div>
      <div class="main">
        <div class="left">
          <div class="upper">
            <div class="rail">
              <div class="rtop"><svg width="10" height="8" viewBox="0 0 10 8"><path d="M0 8l5-8 5 8z" fill="#e02020"/></svg><svg width="10" height="8" viewBox="0 0 10 8"><path d="M0 0l5 8 5-8z" fill="#e02020"/></svg></div>
              ${railTabs.map(([t, h, k]) => {
                const [a, b] = t.split('|');
                return html`<div class="rtab ${k ?? ''}" style="height:${h}px">${[...a].map(c => html`<span>${c}</span>`)}${b ? html`<b>${b}</b>` : ''}</div>`;
              })}
            </div>
            <div class="charts">
              <svg width="1000" height="327" viewBox="15 23 1000 327">${pricePane()}</svg>
              <svg width="1000" height="113" viewBox="15 350 1000 113">${volPane()}</svg>
              <svg width="1000" height="105" viewBox="15 463 1000 105">${macdPane()}</svg>
              <svg width="1000" height="108" viewBox="15 568 1000 108">${signalPane()}</svg>
              <svg width="1000" height="17" viewBox="15 676 1000 17">${datePane()}</svg>
            </div>
          </div>
          <div class="tabbar">
            <div class="rest"></div>
            ${barTabs.map(([t, x, k], i) => {
              const w = (i + 1 < barTabs.length ? barTabs[i + 1][1] : barEnd) - x;
              const cls = k === 1 ? 'a1' : k === 2 ? 'a2' : '';
              return html`<div class="tab ${cls}" style="width:${w}px">${i === 22 ? html`<span class="lat" style="font-weight:normal;font-size:13px">&gt;</span>` : mix(t)}</div>`;
            })}
          </div>
          <div class="lower">
            <div class="tablewrap">
              <div class="tr">
                <div class="namecol hn">名称(4)</div>
                ${heads.map((h, i) => html`<div class="c h" style="width:${cols[i]}px">${mix(h)}${i === 0 ? html`<i>↓</i>` : ''}</div>`)}
              </div>
              ${rowsT.map(r => html`<div class="tr">
                <div class="namecol"><span class="num">${r.n}</span><span class="nm">${r.nm}</span><span class="tag">${r.tag}</span></div>
                ${r.v.map((v, i) => html`<div class="c ${colCls[i]} ${v === '—' ? 'dash' : ''}" style="width:${cols[i]}px">${mix(v)}</div>`)}
              </div>`)}
              <div class="tabs2">
                <div class="tb on" style="width:71px">关联品种</div>
                <div class="tb" style="width:68px">浙江板块</div>
                <div class="tb" style="width:46px">水务</div>
                <div class="tb" style="width:69px">创投概念</div>
                <div class="tb" style="width:71px">水利建设</div>
              </div>
            </div>
            <div class="sb">
              <div class="sbb"><svg width="11" height="7" viewBox="0 0 11 7"><path d="M0 6l5.500-5 5.500 5" stroke="#ddd" stroke-width="2" fill="none"/></svg></div>
              <div class="sbt"><svg width="7" height="7" viewBox="0 0 7 7"><path d="M0 1h7M0 3h7M0 5h7" stroke="#bbb"/></svg></div>
              <div class="sbs"></div>
              <div class="sbb"><svg width="11" height="7" viewBox="0 0 11 7"><path d="M0 1l5.500 5 5.500-5" stroke="#ddd" stroke-width="2" fill="none"/></svg></div>
            </div>
          </div>
        </div>
        <div class="news">
          <div class="nlist">
            ${newsRows.map(([t, m]) => html`<div class="nrow"><span class="nt">${mix(t)}</span><span class="ntm">${m}</span></div>`)}
          </div>
          <div class="nsb"><div class="nbtn"><svg width="10" height="6" viewBox="0 0 10 6"><path d="M0 0h10L5 5z" fill="#88a"/></svg></div></div>
        </div>
        <div class="quote">
          <div class="qs" style="padding-top:49px;height:145px">
            ${['卖五', '卖四', '卖三', '卖二', '卖一'].map(t => html`<div class="qr">${t}</div>`)}
          </div>
          <div class="qs" style="height:97px">
            ${['买一', '买二', '买三', '买四', '买五'].map(t => html`<div class="qr">${t}</div>`)}
          </div>
          <div class="qs" style="height:97px">
            ${quoteRows.map(r => html`<div class="qr qg"><span>${r[0]}</span><span class="qv ${r[2]}">${r[1]}</span><span class="ql2">${r[3]}</span><span class="qv ${r[5]}">${r[4]}</span></div>`)}
          </div>
          <div class="qs" style="height:60px">
            ${quote2.map(r => html`<div class="qr qg"><span>${r[0]}</span><span class="qv">${r[1]}</span><span class="ql2">${r[2]}</span><span class="qv">${mix(r[3])}</span></div>`)}
          </div>
          <div class="qtabs">
            <span style="width:19px">柱</span><span style="width:19px">单</span><span style="width:38px">仅主动</span>
            <span style="border:none;padding-left:2px">龙虎看盘(成交量/按所有)</span>
          </div>
          <div class="qfill"></div>
          ${flows(['买', '入'], ['大', '中', '小'], ['#ff5050', '#7b2828', '#4a1818'])}
          ${flows(['卖', '出'], ['大', '中', '小'], ['#50c050', '#2a8030', '#1a4f1a'])}
        </div>
        <div class="tools">
          <div class="ti0">${icons.down}</div>
          <div class="ti1">${icons.check}</div>
          <div class="ti1">${icons.grid}</div>
          <div class="ti1">${icons.lineup}</div>
          <div class="ti1">${icons.candle}</div>
          <div class="ti1">${icons.stack}</div>
          <div class="ti1">${txtIcon('F10', '#1a4ab0')}</div>
          <div class="ti1">${icons.tree}</div>
          <div class="ti1">${txtIcon('自', '#e06010')}</div>
          <div class="ti1">${txtIcon('F12', '#1a4ab0')}</div>
          <div class="ti1">${icons.fx}</div>
          <div class="ti1">${icons.circle}</div>
          <div class="tsep" style="margin-top:1px"></div>
          <div class="ti1" style="margin-top:3px">${icons.wave}</div>
          <div class="ti1"><span class="bare" style="color:#2030c0">RSI</span></div>
          <div class="ti1"><span class="bare" style="color:#c01818;font-size:15px">S</span></div>
          <div class="ti1">${icons.move}</div>
          <div class="ti1">${icons.pencil}</div>
          <div class="tsep" style="margin-top:1px"></div>
          <div class="ti1" style="margin-top:3px">${txtIcon('F5', '#1a4ab0')}</div>
          <div class="ti1">${icons.refresh}</div>
          ${['1', '5', '15', '30', '60'].map(t => html`<div class="ti1 t">${t}</div>`)}
          <div class="tsep"></div>
          <div class="ti1 t ton">日</div>
          ${['周', '月', 'N', '多', '季', '年'].map(t => html`<div class="ti1 t">${t}</div>`)}
          <div class="tsep"></div>
        </div>
      </div>
      <div class="row3">
        ${lowTabs.map(([t, x, k], i) => {
          const w = (i + 1 < lowTabs.length ? lowTabs[i + 1][1] : lowEnd) - x;
          return html`<div class="tab ${k}" style="width:${w}px;${i === 0 ? 'margin-left:2px' : ''}">${mix(t)}</div>`;
        })}
      </div>
      <div class="status">
        <div class="sico"><i></i></div>
        <span class="st" style="width:1px"></span>
        ${this.cells(stA, 664)}
        <div class="meter"><div class="mt"></div><div class="mb"></div></div>
        <div class="meter"><div class="mt"></div><div class="mb"></div></div>
        <span class="st g" style="margin-left:6px">已断开,点击此处连接行情主站</span>
        <div class="sticon">${statusIcons}</div>
      </div>
      <div class="taskbar">
        <div style="width:55px;display:flex;justify-content:center;flex:none;padding-left:5px;box-sizing:border-box">${orb}</div>
        <div style="width:21px;flex:none">${grip}</div>
        <div class="tk"><div class="ic">${ieIcon}</div>【指标公式分享...</div>
        <div style="width:66px;display:flex;justify-content:center;flex:none">${folderIcon}</div>
        <div style="width:62px;display:flex;justify-content:center;flex:none">${mediaIcon}</div>
        <div class="tk on"><div class="ic">${tdxIcon}</div>通达信金融终端...</div>
        <div style="width:3px;flex:none"></div>
        <div class="tk"><div class="ic"><div class="hao"><b>hǎo</b><i>123</i></div></div>HAO123一键安...</div>
        <div class="tray">
          ${grip}
          <span style="font:bold 11px 'Liberation Mono',monospace;margin-left:11px">CH</span>
          <span style="margin-left:6px">${iconsTray.kb}</span>
          <span style="margin-left:17px">${iconsTray.usb}</span>
          <span style="margin-left:11px">${iconsTray.up}</span>
          <span style="margin-left:13px">${iconsTray.plug}</span>
          <span style="margin-left:10px">${iconsTray.net}</span>
          <span style="margin-left:9px">${iconsTray.spk}</span>
          <div class="clock">9:21<br>2014/11/21 星期五</div>
          <div class="sd"></div>
        </div>
      </div>
    `;
  }
}
